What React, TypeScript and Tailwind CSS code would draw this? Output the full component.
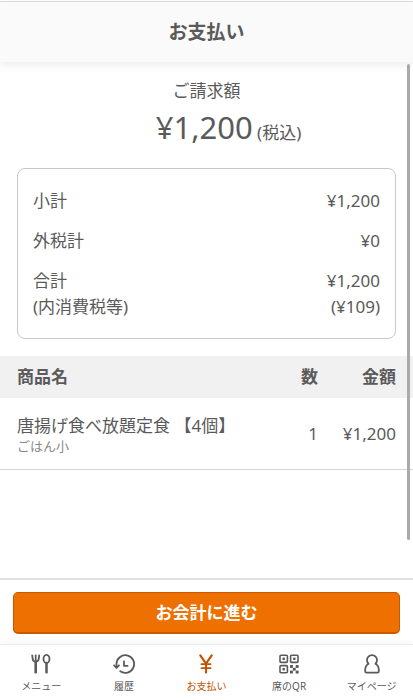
import React from 'react';

const summary = [
    { label: '小計', value: '¥1,200' },
    { label: '外税計', value: '¥0' },
    { label: '合計', value: '¥1,200', subLabel: '(内消費税等)', subValue: '(¥109)' },
];

const items = [
    { name: '唐揚げ食べ放題定食 【4個】', option: 'ごはん小', count: 1, price: '¥1,200' },
];

const MenuIcon = () => (
    <svg width="20" height="20" viewBox="0 0 20 20" fill="none" stroke="currentColor" strokeLinecap="round" aria-hidden="true">
        <path d="M1.2 1.3 L1.7 5 Q2.2 7.6 4.7 7.6 Q7.2 7.6 7.7 5 L8.2 1.3" strokeWidth="1.8" />
        <path d="M4.7 1.3 V8" strokeWidth="1.7" />
        <path d="M4.7 8 V18.2" strokeWidth="2.6" />
        <ellipse cx="15.5" cy="4.9" rx="3" ry="4" strokeWidth="1.8" />
        <path d="M15.5 9 V18.2" strokeWidth="2.5" />
    </svg>
);

const HistoryIcon = () => (
    <svg width="22" height="20" viewBox="0 0 22 20" fill="none" stroke="currentColor" strokeWidth="1.8" strokeLinecap="round" strokeLinejoin="round" aria-hidden="true">
        <path d="M3.5 13.2 V10 A8.8 8.8 0 1 1 7.2 17.2" />
        <path d="M1.1 11.4 L3.5 14 L6 11.4" />
        <path d="M11 7.4 V11.8 H14.6" />
    </svg>
);

const YenIcon = () => (
    <svg width="20" height="20" viewBox="0 0 20 20" fill="none" stroke="currentColor" strokeWidth="2.1" strokeLinecap="round" aria-hidden="true">
        <path d="M4.3 1.3 L10 9.7 L15.7 1.3" />
        <path d="M10 9.7 V18.6" />
        <path d="M5.4 10.2 H14.6 M5.4 14.2 H14.6" strokeWidth="1.7" />
    </svg>
);

const QrIcon = () => (
    <svg width="20" height="20" viewBox="0 0 20 20" aria-hidden="true">
        <g fill="none" stroke="currentColor" strokeWidth="1.6">
            <rect x="1" y="1.2" width="7.4" height="7.2" rx="1" />
            <rect x="11.6" y="1.2" width="7.4" height="7.2" rx="1" />
            <rect x="1" y="11.6" width="7.4" height="7.2" rx="1" />
        </g>
        <g fill="currentColor">
            <rect x="3.5" y="3.6" width="2.4" height="2.4" />
            <rect x="14.1" y="3.6" width="2.4" height="2.4" />
            <rect x="3.5" y="14" width="2.4" height="2.4" />
            <rect x="11" y="11" width="2.9" height="2.9" />
            <rect x="16.7" y="11" width="2.9" height="2.9" />
            <rect x="13.8" y="13.8" width="2.9" height="2.9" />
            <rect x="11" y="16.6" width="2.9" height="2.9" />
            <rect x="16.7" y="16.6" width="2.9" height="2.9" />
        </g>
    </svg>
);

const UserIcon = () => (
    <svg width="20" height="20" viewBox="0 0 20 20" fill="none" stroke="currentColor" strokeWidth="1.8" strokeLinejoin="round" aria-hidden="true">
        <path d="M6.6 9.8 A5 5 0 1 1 13.4 9.8 C15.8 11 16.8 13.4 16.8 16 V17.2 Q16.8 18.6 15.4 18.6 H4.6 Q3.2 18.6 3.2 17.2 V16 C3.2 13.4 4.2 11 6.6 9.8 Z" />
    </svg>
);

const tabs = [
    { label: 'メニュー', icon: <MenuIcon />, active: false },
    { label: '履歴', icon: <HistoryIcon />, active: false },
    { label: 'お支払い', icon: <YenIcon />, active: true },
    { label: '席のQR', icon: <QrIcon />, active: false },
    { label: 'マイページ', icon: <UserIcon />, active: false },
];

const Summary = () => {
    return (
        <dl className="mx-[17px] mt-3 flex flex-col gap-[14px] rounded-lg border border-[#c8c8c8] px-[15px] pt-[19px] pb-[18px] leading-[26px]">
            {summary.map((row) => (
                <div key={row.label} className="flex justify-between">
                    <dt>
                        {row.label}
                        {row.subLabel && <span className="block">{row.subLabel}</span>}
                    </dt>
                    <dd className="text-right">
                        {row.value}
                        {row.subValue && <span className="block">{row.subValue}</span>}
                    </dd>
                </div>
            ))}
        </dl>
    )
}

const ItemTable = () => {
    return (
        <table className="mt-[17px] w-full">
            <thead className="bg-[#f1f1f1]">
                <tr className="h-[42px]">
                    <th className="pl-[17px] text-left font-bold">商品名</th>
                    <th className="w-[40px] text-right font-bold">数</th>
                    <th className="w-[95px] pr-[17px] text-right font-bold">金額</th>
                </tr>
            </thead>
            <tbody>
                {items.map((item) => (
                    <tr key={item.name} className="h-[71px] border-b border-[#d4d4d4]">
                        <td className="pt-[2px] pl-[17px]">
                            <p className="leading-6">{item.name}</p>
                            <p className="text-[13px] leading-4 text-[#8a8a8a]">{item.option}</p>
                        </td>
                        <td className="text-right">{item.count}</td>
                        <td className="pr-[17px] text-right">{item.price}</td>
                    </tr>
                ))}
            </tbody>
        </table>
    )
}

const App = () => {
    return (
        <div className="flex h-screen flex-col bg-white font-['Noto_Sans','Noto_Sans_CJK_JP',sans-serif] text-[17px] text-[#5a5a5a]">
            <header className="mt-px flex h-[61px] shrink-0 items-center justify-center border-t border-[#d9d9d9] bg-[#fafafa] shadow-[0_3px_8px_rgba(0,0,0,0.08)]">
                <h1 className="text-[19px] font-bold">お支払い</h1>
            </header>

            <div className="relative flex min-h-0 flex-1 flex-col">
                <main className="flex-1 overflow-hidden pt-4">
                    <div className="text-center">
                        <p className="leading-[26px]">ご請求額</p>
                        <p className="pl-[44px] leading-[46px]">
                            <strong className="text-[31px] font-normal">¥1,200</strong> (税込)
                        </p>
                    </div>
                    <Summary />
                    <ItemTable />
                </main>
                <div className="absolute top-[2px] right-[3px] bottom-[38px] w-[3px] rounded-full bg-[#aaaaaa]" />
            </div>

            <div className="shrink-0 border-t-2 border-[#e0e0e0] px-[13px] pt-3 pb-[10px]">
                <button type="button" className="h-[42px] w-full rounded-[5px] border border-b-2 border-[#c75a00] bg-[#ee7000] pt-px font-bold text-white">
                    お会計に進む
                </button>
            </div>

            <nav className="grid shrink-0 grid-cols-5 border-t border-[#ececec] pt-[9px] pb-[6px] shadow-[0_-2px_5px_rgba(0,0,0,0.04)]">
                {tabs.map((tab) => (
                    <a key={tab.label} href="#" className={`flex flex-col items-center gap-1 text-[10px] leading-4 ${tab.active ? "text-[#c25200]" : "text-[#5a5a5a]"}`}>
                        {tab.icon}
                        {tab.label}
                    </a>
                ))}
            </nav>
        </div>
    )
}
export default App
